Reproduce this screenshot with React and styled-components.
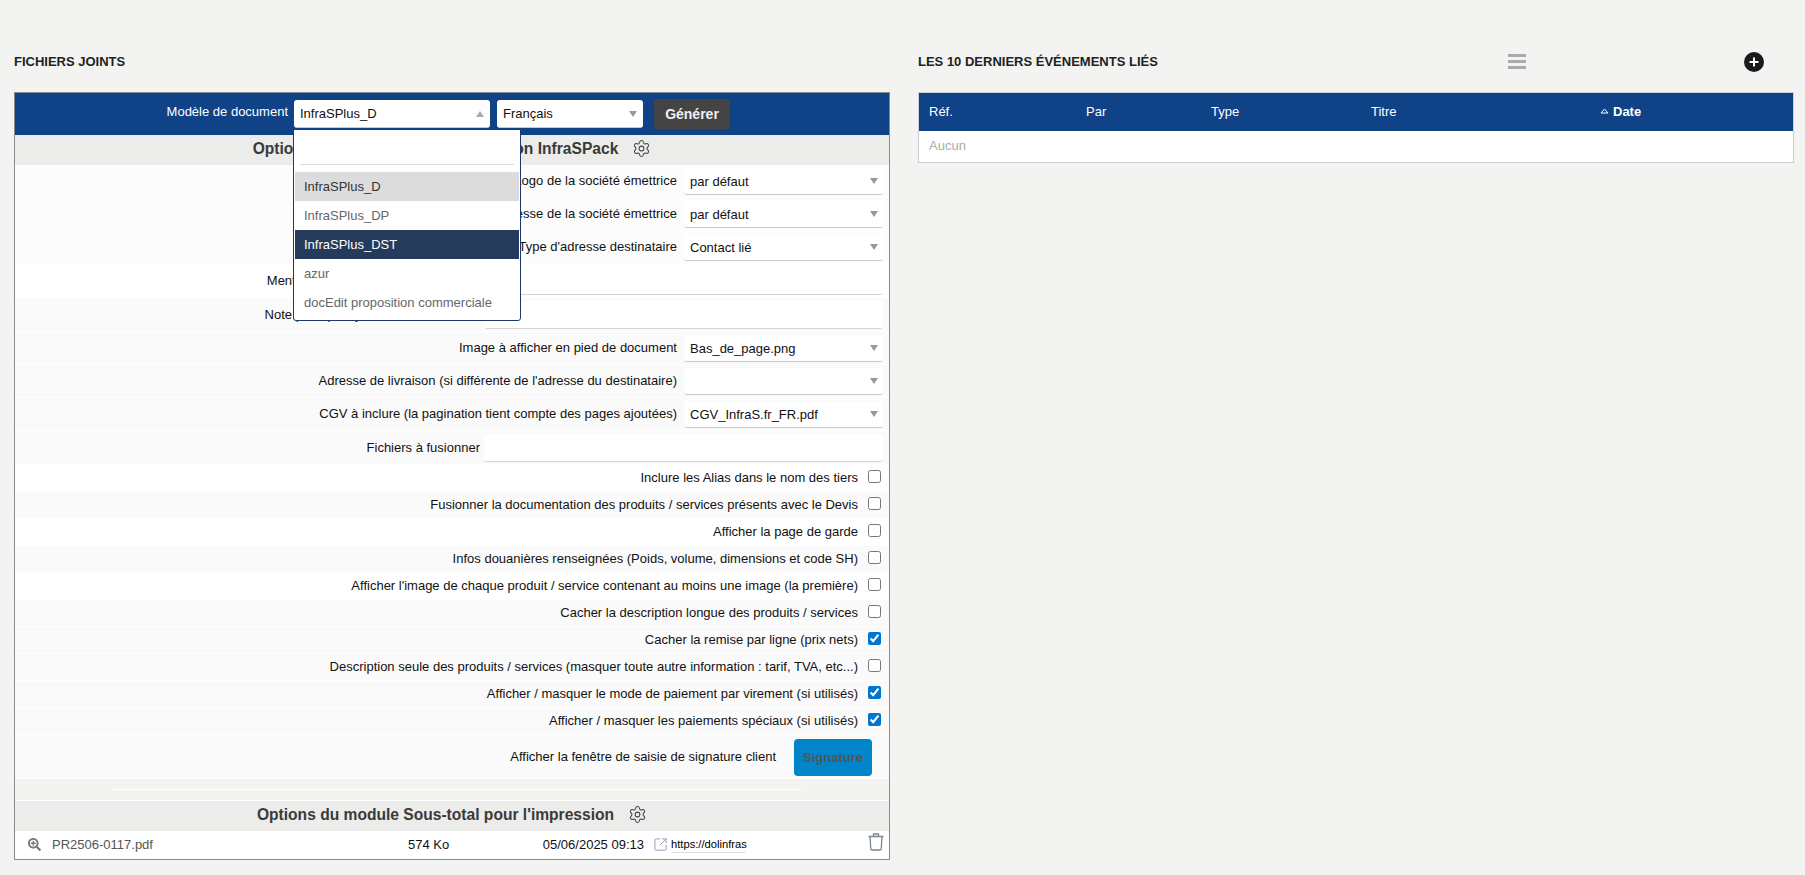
import React from 'react'
import styled, { createGlobalStyle } from 'styled-components'
import { Settings, SquareArrowOutUpRight } from 'lucide-react'
import { FaSearchPlus } from 'react-icons/fa'

const GlobalStyle = createGlobalStyle`
  html, body { margin: 0; padding: 0; background: #f3f3f2; }
  body { font-family: "Liberation Sans", Arial, sans-serif; font-size: 13px; color: #111; }
`

const Page = styled.div`
  display: grid;
  grid-template-columns: 876px 876px;
  column-gap: 28px;
  padding: 0 11px 14px 14px;
  height: 875px;
  box-sizing: border-box;
  overflow: hidden;
`
const Column = styled.section`
  display: flex;
  flex-direction: column;
`
const TitleBar = styled.div`
  height: 92px;
  display: flex;
  align-items: center;
  padding-top: 32px;
  box-sizing: border-box;
`
const Title = styled.h2`
  margin: -2px 0 0;
  font-size: 13px;
  font-weight: 700;
  text-transform: uppercase;
  color: #222;
  width: 590px;
`
const BarsIcon = styled.div`
  width: 18px;
  height: 15px;
  display: flex;
  flex-direction: column;
  justify-content: space-between;
  margin: -1px 218px 0 0;
  span { height: 3px; background: #aaa; }
`
const Panel = styled.div`
  position: relative;
  border: 1px solid #8b8b8b;
  background: #f3f3f2;
`
const BlueBar = styled.div`
  height: 42px;
  background: #0f4286;
  display: flex;
  align-items: center;
  padding-left: 279px;
`
const BarLabel = styled.label`
  color: #fff;
  font-size: 13px;
  position: absolute;
  right: 601px;
  top: 11px;
  white-space: nowrap;
`
const SelectBox = styled.div`
  width: ${p => p.$w}px;
  height: 28px;
  background: #fff;
  border-radius: 3px;
  box-sizing: border-box;
  border-bottom: 1px solid #c9c9c9;
  display: flex;
  align-items: center;
  padding: 0 6px;
  margin-right: ${p => p.$mr || 0}px;
  font-size: 13px;
  color: #111;
`
const Caret = styled.i`
  width: 0;
  height: 0;
  margin-left: auto;
  border-left: 4px solid transparent;
  border-right: 4px solid transparent;
  ${p => p.$up ? 'border-bottom: 6px solid #aaa;' : 'border-top: 6px solid #999;'}
`
const GenerateButton = styled.button`
  width: 76px;
  height: 30px;
  border: 0;
  background: #444;
  color: #f0f0f0;
  font: 700 14px "Liberation Sans", Arial, sans-serif;
  padding: 0;
`
const SectionHead = styled.div`
  height: ${p => p.$h || 30}px;
  box-sizing: border-box;
  background: #ececea;
  display: flex;
  align-items: center;
  justify-content: center;
  gap: 14px;
  padding-bottom: 2px;
  font-size: 15.6px;
  font-weight: 700;
  color: #3a3a3a;
  ${p => p.$line && 'border-top: 1px solid #fff;'}
  svg { color: #444; margin-top: -2px; }
`
const Row = styled.div`
  height: ${p => p.$h}px;
  display: flex;
  align-items: center;
  justify-content: flex-end;
  background: ${p => p.$bg || '#fafafa'};
  box-shadow: inset 0 -1px 0 #fff;
  box-sizing: border-box;
  color: #111;
`
const FieldLabel = styled.span`
  white-space: nowrap;
  margin-right: ${p => p.$mr}px;
  margin-top: -2px;
`
const RowSelect = styled(SelectBox)`
  width: 199px;
  height: 27px;
  margin-right: 6px;
  padding-right: 5px;
`
const RowInput = styled.div`
  width: 399px;
  height: 28px;
  margin-right: 6px;
  background: #fff;
  border-radius: 3px;
  border-bottom: 1px solid #d4d4d4;
  box-sizing: border-box;
`
const Check = styled.input.attrs({ type: 'checkbox' })`
  width: 13px;
  height: 13px;
  margin: -4px 8px 0 10px;
  accent-color: #0075d0;
`
const SignatureButton = styled.div`
  width: 78px;
  height: 37px;
  margin: 0 17px 0 18px;
  border-radius: 4px;
  background: #0085cb;
  color: #555;
  font-weight: 700;
  font-size: 13px;
  display: flex;
  align-items: center;
  justify-content: center;
`
const Spacer = styled.div`
  height: 21px;
  display: flex;
  align-items: center;
  justify-content: center;
  padding-left: 8px;
  &::after { content: ''; width: 691px; height: 1px; background: #fff; }
`
const FileRow = styled.div`
  height: 28px;
  padding-bottom: 2px;
  box-sizing: border-box;
  background: #fff;
  display: grid;
  grid-template-columns: 24px 356px 100px 136px 1fr;
  align-items: center;
  padding-left: 13px;
  position: relative;
`
const FileName = styled.span`
  color: #555;
  font-size: 13px;
`
const FileDate = styled.span`
  display: flex;
  justify-content: flex-end;
  white-space: nowrap;
`
const LinkCell = styled.span`
  display: flex;
  align-items: center;
  gap: 3px;
  padding-left: 9px;
  svg { color: #a48fb5; }
`
const UrlBox = styled.span`
  width: 75px;
  height: 15px;
  line-height: 14px;
  font-size: 11.2px;
  white-space: nowrap;
  color: #000;
  background: #fff;
  border-bottom: 1px solid #ddd;
  border-radius: 2px;
  margin-top: 2px;
`
const TrashIcon = styled.svg`
  position: absolute;
  right: 5px;
  top: 2px;
`
const DropMenu = styled.div`
  position: absolute;
  left: 278px;
  top: 36px;
  width: 228px;
  height: 192px;
  background: #fff;
  border: 1px solid #1c3a63;
  border-radius: 0 0 3px 3px;
  box-sizing: border-box;
  padding: 0 1px;
  z-index: 5;
`
const SearchBox = styled.div`
  height: 35px;
  box-sizing: border-box;
  margin: 0 5px 7px;
  border-bottom: 1px solid #ddd;
`
const Option = styled.div`
  height: 29px;
  line-height: 29px;
  padding-left: 9px;
  font-size: 13px;
  background: ${p => p.$sel ? '#dcdcdc' : p.$active ? '#253b5c' : 'transparent'};
  color: ${p => p.$sel ? '#333' : p.$active ? '#fff' : '#666'};
`
const EventTable = styled.div`
  border: 1px solid #cfcfcf;
  background: #fff;
  height: 71px;
  box-sizing: border-box;
`
const EventHead = styled.div`
  height: 38px;
  padding: 0 0 2px 10px;
  box-sizing: border-box;
  background: #0f4286;
  display: grid;
  grid-template-columns: 157px 125px 160px 229px 1fr;
  align-items: center;
  color: #fff;
  font-size: 13px;
`
const SortCell = styled.span`
  display: flex;
  align-items: center;
  gap: 4px;
  font-weight: 700;
`
const Empty = styled.div`
  padding: 7px 10px;
  color: #aaa;
  font-size: 13px;
`

const selectRows = [
  ['Logo de la société émettrice', 'par défaut'],
  ['Adresse de la société émettrice', 'par défaut'],
  ["Type d'adresse destinataire", 'Contact lié'],
]
const lowerRows = [
  ['Image à afficher en pied de document', 'Bas_de_page.png'],
  ["Adresse de livraison (si différente de l'adresse du destinataire)", ''],
  ['CGV à inclure (la pagination tient compte des pages ajoutées)', 'CGV_InfraS.fr_FR.pdf'],
]
const checks = [
  ['Inclure les Alias dans le nom des tiers', false],
  ['Fusionner la documentation des produits / services présents avec le Devis', false],
  ['Afficher la page de garde', false],
  ['Infos douanières renseignées (Poids, volume, dimensions et code SH)', false],
  ["Afficher l'image de chaque produit / service contenant au moins une image (la première)", false],
  ['Cacher la description longue des produits / services', false],
  ['Cacher la remise par ligne (prix nets)', true],
  ['Description seule des produits / services (masquer toute autre information : tarif, TVA, etc...)', false],
  ['Afficher / masquer le mode de paiement par virement (si utilisés)', true],
  ['Afficher / masquer les paiements spéciaux (si utilisés)', true],
]
const options = ['InfraSPlus_D', 'InfraSPlus_DP', 'InfraSPlus_DST', 'azur', 'docEdit proposition commerciale']

const SelectRow = ({ label, value, bg }) => (
  <Row $h={33} $bg={bg}>
    <FieldLabel $mr={7}>{label}</FieldLabel>
    <RowSelect>{value}<Caret /></RowSelect>
  </Row>
)
const InputRow = ({ label, bg }) => (
  <Row $h={34} $bg={bg}>
    <FieldLabel $mr={4}>{label}</FieldLabel>
    <RowInput />
  </Row>
)

export default function App() {
  return (
    <>
      <GlobalStyle />
      <Page>
        <Column>
          <TitleBar><Title>Fichiers joints</Title></TitleBar>
          <Panel>
            <BlueBar>
              <BarLabel>Modèle de document</BarLabel>
              <SelectBox $w={196} $mr={7}>InfraSPlus_D<Caret $up /></SelectBox>
              <SelectBox $w={146} $mr={11}>Français<Caret /></SelectBox>
              <GenerateButton>Générer</GenerateButton>
            </BlueBar>
            <SectionHead>Options du module de documentation InfraSPack <Settings size={19} strokeWidth={1.3} /></SectionHead>
            {selectRows.map(([l, v]) => <SelectRow key={l} label={l} value={v} bg="#fcfcfc" />)}
            <InputRow label="Mention complémentaire personnelle" bg="#fff" />
            <InputRow label="Note publique ajoutée à ce document" />
            {lowerRows.map(([l, v]) => <SelectRow key={l} label={l} value={v} />)}
            <InputRow label="Fichiers à fusionner" />
            {checks.map(([l, c], i) => (
              <Row key={l} $h={27} $bg={i < 5 && i % 2 === 0 ? '#fff' : '#fafafa'}>
                <FieldLabel $mr={0}>{l}</FieldLabel>
                <Check defaultChecked={c} />
              </Row>
            ))}
            <Row $h={44}>
              <FieldLabel $mr={0}>Afficher la fenêtre de saisie de signature client</FieldLabel>
              <SignatureButton>Signature</SignatureButton>
            </Row>
            <Spacer />
            <SectionHead $h={31} $line>Options du module Sous-total pour l'impression <Settings size={19} strokeWidth={1.3} /></SectionHead>
            <FileRow>
              <FaSearchPlus size={13} color="#777" />
              <FileName>PR2506-0117.pdf</FileName>
              <span>574 Ko</span>
              <FileDate>05/06/2025 09:13</FileDate>
              <LinkCell>
                <SquareArrowOutUpRight size={15} strokeWidth={1.5} />
                <UrlBox>https://dolinfras</UrlBox>
              </LinkCell>
              <TrashIcon width="16" height="18" viewBox="0 0 16 18" fill="none" stroke="#7d8590" strokeWidth="1.3">
                <path d="M.5 3.5h15M5.5 3.5V1h5v2.5M2 3.5l.8 12.5a1.2 1.2 0 0 0 1.2 1h8a1.2 1.2 0 0 0 1.2-1L14 3.5" />
              </TrashIcon>
            </FileRow>
            <DropMenu>
              <SearchBox />
              {options.map((o, i) => <Option key={o} $sel={i === 0} $active={i === 2}>{o}</Option>)}
            </DropMenu>
          </Panel>
        </Column>
        <Column>
          <TitleBar>
            <Title>Les 10 derniers événements liés</Title>
            <BarsIcon><span /><span /><span /></BarsIcon>
            <svg width="20" height="20" viewBox="0 0 20 20">
              <circle cx="10" cy="10" r="10" fill="#1a1a1a" />
              <path d="M10 5.5v9M5.5 10h9" stroke="#fff" strokeWidth="2" />
            </svg>
          </TitleBar>
          <EventTable>
            <EventHead>
              <span>Réf.</span>
              <span>Par</span>
              <span>Type</span>
              <span>Titre</span>
              <SortCell>
                <svg width="9" height="6" viewBox="0 0 9 6" fill="none" stroke="#fff"><path d="M1 5h7L4.5 1z" /></svg>
                Date
              </SortCell>
            </EventHead>
            <Empty>Aucun</Empty>
          </EventTable>
        </Column>
      </Page>
    </>
  )
}
